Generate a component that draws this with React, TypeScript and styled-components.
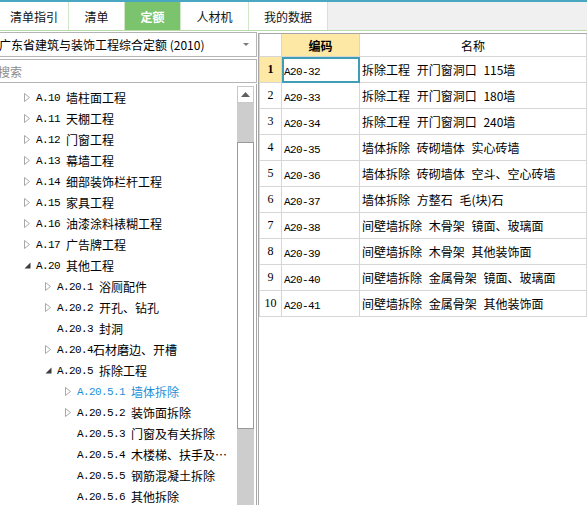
import React from 'react';
import styled, { createGlobalStyle } from 'styled-components';

const GlobalStyle = createGlobalStyle`
  html, body {
    margin: 0;
    padding: 0;
    background: #ffffff;
  }
  body {
    font-family: "Noto Sans CJK SC", "Liberation Sans", sans-serif;
    font-size: 12px;
    color: #000;
  }
`;

const Page = styled.div`
  width: 587px;
  height: 505px;
  overflow: hidden;
  display: flex;
  flex-direction: column;
  background: #fff;
`;

/* tab strip */
const TabBar = styled.div`
  display: flex;
  height: 28px;
  border-top: 2px solid #49a7c2;
  border-bottom: 1px solid #b9dcae;
  background: #f0f0f0;
  flex-shrink: 0;
`;

const Tab = styled.div<{ $w: number; $active?: boolean }>`
  width: ${p => p.$w}px;
  box-sizing: border-box;
  display: flex;
  align-items: center;
  justify-content: center;
  border-right: 1px solid #cfe7c7;
  background: ${p => (p.$active ? '#7cc36e' : '#ffffff')};
  color: ${p => (p.$active ? '#ffffff' : '#111')};
  font-weight: ${p => (p.$active ? 'bold' : 'normal')};
  font-size: 12px;
  padding-top: 1px;
`;

const Body = styled.div`
  flex: 1;
  display: flex;
  min-height: 0;
`;

/* left side */
const LeftPanel = styled.div`
  width: 261px;
  margin-left: -4px;
  display: flex;
  flex-direction: column;
  padding-top: 1px;
`;

const Dropdown = styled.div`
  height: 25px;
  box-sizing: border-box;
  border: 1px solid #b4b4b4;
  display: flex;
  align-items: center;
  justify-content: space-between;
  padding: 0 7px 0 2px;
  white-space: nowrap;
`;

const Caret = styled.span`
  width: 0;
  height: 0;
  border-left: 3px solid transparent;
  border-right: 3px solid transparent;
  border-top: 3px solid #7a7a7a;
`;

const Search = styled.div`
  height: 24px;
  margin-top: 2px;
  box-sizing: border-box;
  border: 1px solid #b4b4b4;
  display: flex;
  align-items: center;
  padding-left: 1px;
  color: #8c8c8c;
`;

const TreeBox = styled.div`
  flex: 1;
  margin-top: 1px;
  display: flex;
  border-right: 1px solid #a6a6a6;
  min-height: 0;
  overflow: hidden;
`;

const TreeList = styled.div`
  flex: 1;
  padding-top: 3px;
`;

const TreeRow = styled.div<{ $indent: number; $selected?: boolean }>`
  height: 21px;
  display: flex;
  align-items: center;
  padding-left: ${p => p.$indent}px;
  color: ${p => (p.$selected ? '#1b8fd8' : '#000')};
  white-space: nowrap;
`;

const Toggle = styled.span`
  width: 7px;
  height: 9px;
  margin-right: 5px;
  display: flex;
  align-items: center;
`;

const Code = styled.span`
  font-family: "Liberation Mono", "DejaVu Sans Mono", monospace;
  font-size: 11px;
  letter-spacing: -0.6px;
  white-space: pre;
`;

const ScrollBar = styled.div`
  width: 17px;
  display: flex;
  flex-direction: column;
  background: #cdcdcd;
  margin-top: 2px;
  margin-right: 2px;
`;

const ScrollBtn = styled.div`
  height: 17px;
  box-sizing: border-box;
  border: 1px solid #c9c9c9;
  background: #fff;
  display: flex;
  align-items: center;
  justify-content: center;
`;

const ScrollThumb = styled.div`
  height: 287px;
  margin-top: 39px;
  box-sizing: border-box;
  border: 1px solid #9a9a9a;
  background: #fff;
`;

/* right side */
const RightPanel = styled.div`
  flex: 1;
  margin-top: 2px;
  border-left: 1px solid #a6a6a6;
  border-top: 1px solid #a6a6a6;
  margin-left: 1px;
`;

const Grid = styled.table`
  border-collapse: collapse;
  width: 100%;
  table-layout: fixed;
`;

const Row = styled.tr`
  height: 26px;
`;

const HeadCell = styled.th<{ $hl?: boolean }>`
  height: 22px;
  padding: 0;
  font-weight: ${p => (p.$hl ? 'bold' : 'normal')};
  background: ${p => (p.$hl ? '#fde8a5' : '#fff')};
  border: 1px solid #d6d6d6;
  border-top: none;
  font-size: 12px;
`;

const NumCell = styled.td<{ $sel?: boolean }>`
  padding: 0;
  text-align: center;
  background: ${p => (p.$sel ? '#fde8a5' : '#fff')};
  font-weight: ${p => (p.$sel ? 'bold' : 'normal')};
  border: 1px solid #d6d6d6;
  font-family: "Liberation Serif", serif;
  font-size: 12px;
`;

const CodeCell = styled.td<{ $sel?: boolean }>`
  padding: 0 0 0 2px;
  border: 1px solid #d6d6d6;
  outline: ${p => (p.$sel ? '2px solid #3f9db5' : 'none')};
  outline-offset: -2px;
`;

const NameCell = styled.td`
  padding: 0 0 0 2px;
  border: 1px solid #d6d6d6;
  white-space: nowrap;
  font-size: 12px;
  word-spacing: 4px;
`;

const Collapsed = () => (
  <svg width="6" height="9" viewBox="0 0 6 9">
    <polygon points="0.5,0.5 5.5,4.5 0.5,8.5" fill="#fff" stroke="#a8a8a8" />
  </svg>
);

const Expanded = () => (
  <svg width="7" height="7" viewBox="0 0 7 7">
    <polygon points="6.5,0.5 6.5,6.5 0.5,6.5" fill="#3c3c3c" />
  </svg>
);

type Node = { level: number; code: string; name: string; state?: 'open' | 'closed'; selected?: boolean };

const tree: Node[] = [
  { level: 1, code: 'A.10 ', name: '墙柱面工程', state: 'closed' },
  { level: 1, code: 'A.11 ', name: '天棚工程', state: 'closed' },
  { level: 1, code: 'A.12 ', name: '门窗工程', state: 'closed' },
  { level: 1, code: 'A.13 ', name: '幕墙工程', state: 'closed' },
  { level: 1, code: 'A.14 ', name: '细部装饰栏杆工程', state: 'closed' },
  { level: 1, code: 'A.15 ', name: '家具工程', state: 'closed' },
  { level: 1, code: 'A.16 ', name: '油漆涂料裱糊工程', state: 'closed' },
  { level: 1, code: 'A.17 ', name: '广告牌工程', state: 'closed' },
  { level: 1, code: 'A.20 ', name: '其他工程', state: 'open' },
  { level: 2, code: 'A.20.1 ', name: '浴厕配件', state: 'closed' },
  { level: 2, code: 'A.20.2 ', name: '开孔、钻孔', state: 'closed' },
  { level: 2, code: 'A.20.3 ', name: '封洞' },
  { level: 2, code: 'A.20.4', name: '石材磨边、开槽', state: 'closed' },
  { level: 2, code: 'A.20.5 ', name: '拆除工程', state: 'open' },
  { level: 3, code: 'A.20.5.1 ', name: '墙体拆除', state: 'closed', selected: true },
  { level: 3, code: 'A.20.5.2 ', name: '装饰面拆除', state: 'closed' },
  { level: 3, code: 'A.20.5.3 ', name: '门窗及有关拆除' },
  { level: 3, code: 'A.20.5.4 ', name: '木楼梯、扶手及…' },
  { level: 3, code: 'A.20.5.5 ', name: '钢筋混凝土拆除' },
  { level: 3, code: 'A.20.5.6 ', name: '其他拆除' },
];

const indents = [0, 28, 49, 69];

const rows = [
  ['A20-32', '拆除工程 开门窗洞口 115墙'],
  ['A20-33', '拆除工程 开门窗洞口 180墙'],
  ['A20-34', '拆除工程 开门窗洞口 240墙'],
  ['A20-35', '墙体拆除 砖砌墙体 实心砖墙'],
  ['A20-36', '墙体拆除 砖砌墙体 空斗、空心砖墙'],
  ['A20-37', '墙体拆除 方整石 毛(块)石'],
  ['A20-38', '间壁墙拆除 木骨架 镜面、玻璃面'],
  ['A20-39', '间壁墙拆除 木骨架 其他装饰面'],
  ['A20-40', '间壁墙拆除 金属骨架 镜面、玻璃面'],
  ['A20-41', '间壁墙拆除 金属骨架 其他装饰面'],
];

const tabs = [
  { label: '清单指引', w: 69 },
  { label: '清单', w: 56 },
  { label: '定额', w: 56, active: true },
  { label: '人材机', w: 68 },
  { label: '我的数据', w: 79 },
];

export default function App() {
  return (
    <Page>
      <GlobalStyle />
      <TabBar>
        {tabs.map(t => (
          <Tab key={t.label} $w={t.w} $active={t.active}>
            {t.label}
          </Tab>
        ))}
      </TabBar>
      <Body>
        <LeftPanel>
          <Dropdown>
            <span>广东省建筑与装饰工程综合定额 (2010)</span>
            <Caret />
          </Dropdown>
          <Search>搜索</Search>
          <TreeBox>
            <TreeList>
              {tree.map(n => (
                <TreeRow key={n.code} $indent={indents[n.level]} $selected={n.selected}>
                  <Toggle>
                    {n.state === 'closed' && <Collapsed />}
                    {n.state === 'open' && <Expanded />}
                  </Toggle>
                  <Code>{n.code}</Code>
                  <span>{n.name}</span>
                </TreeRow>
              ))}
            </TreeList>
            <ScrollBar>
              <ScrollBtn>
                <svg width="9" height="5" viewBox="0 0 9 5">
                  <polygon points="0,5 4.5,0 9,5" fill="#606060" />
                </svg>
              </ScrollBtn>
              <ScrollThumb />
            </ScrollBar>
          </TreeBox>
        </LeftPanel>
        <RightPanel>
          <Grid>
            <colgroup>
              <col style={{ width: 22 }} />
              <col style={{ width: 78 }} />
              <col />
            </colgroup>
            <thead>
              <tr>
                <HeadCell />
                <HeadCell $hl>编码</HeadCell>
                <HeadCell>名称</HeadCell>
              </tr>
            </thead>
            <tbody>
              {rows.map((r, i) => (
                <Row key={r[0]}>
                  <NumCell $sel={i === 0}>{i + 1}</NumCell>
                  <CodeCell $sel={i === 0}>
                    <Code>{r[0]}</Code>
                  </CodeCell>
                  <NameCell>{r[1]}</NameCell>
                </Row>
              ))}
            </tbody>
          </Grid>
        </RightPanel>
      </Body>
    </Page>
  );
}
